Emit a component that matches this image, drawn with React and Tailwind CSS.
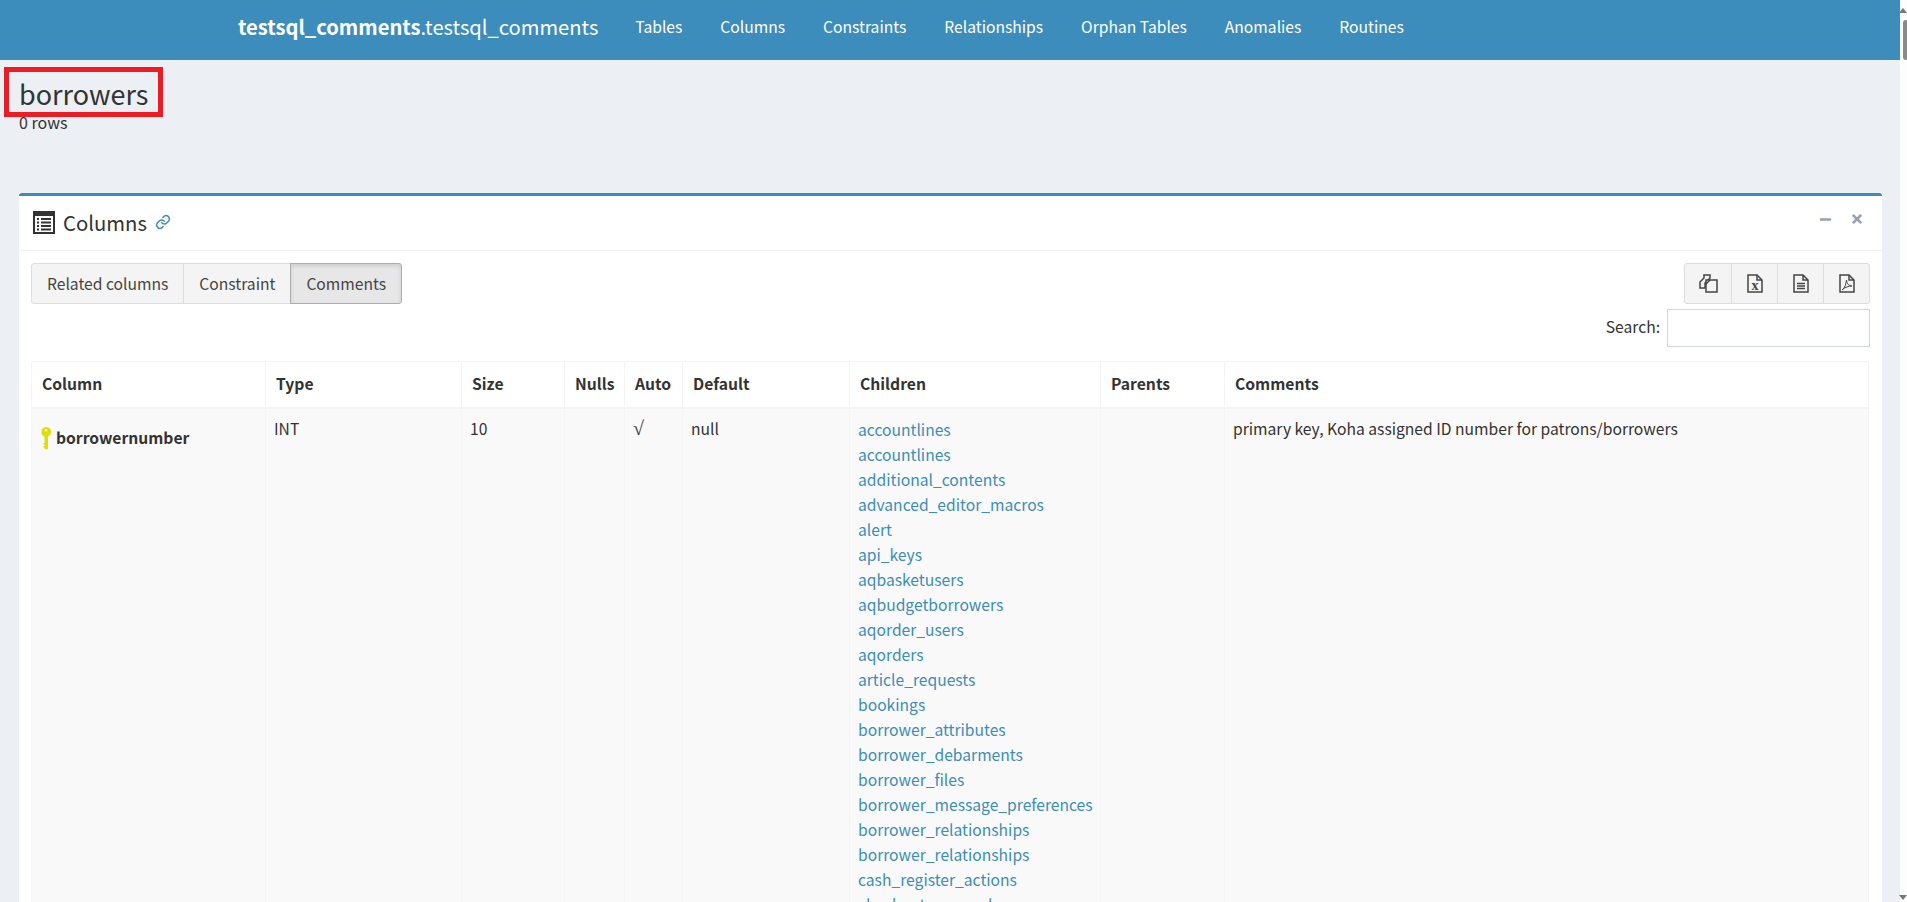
import { FaMinus, FaTimes } from "react-icons/fa";

const navItems = [
  "Tables",
  "Columns",
  "Constraints",
  "Relationships",
  "Orphan Tables",
  "Anomalies",
  "Routines",
];

const children = [
  "accountlines",
  "accountlines",
  "additional_contents",
  "advanced_editor_macros",
  "alert",
  "api_keys",
  "aqbasketusers",
  "aqbudgetborrowers",
  "aqorder_users",
  "aqorders",
  "article_requests",
  "bookings",
  "borrower_attributes",
  "borrower_debarments",
  "borrower_files",
  "borrower_message_preferences",
  "borrower_relationships",
  "borrower_relationships",
  "cash_register_actions",
  "checkout_renewals",
];

const FileIcon = ({ children: inner }) => (
  <svg width="16" height="19" viewBox="0 0 16 19" fill="none" stroke="#444" strokeWidth="1.5">
    <path d="M1 1h9l5 5v12H1z" />
    <path d="M10 1v5h5" />
    {inner}
  </svg>
);

const exportIcons = [
  <svg key="copy" width="19" height="19" viewBox="0 0 19 19" fill="none" stroke="#444" strokeWidth="1.5">
    <path d="M1 8l4-4V1h6v3L6 9v5H1z" />
    <path d="M7 6h11v12H7V10z" fill="#f4f4f4" />
    <path d="M7 10l4-4" />
  </svg>,
  <FileIcon key="excel">
    <text x="8" y="15.500" textAnchor="middle" fontSize="14" fontWeight="700" fontFamily="'Liberation Serif', serif" fill="#444" stroke="none">
      x
    </text>
  </FileIcon>,
  <FileIcon key="csv">
    <path d="M4 9.500h8M4 12h8M4 14.500h8" />
  </FileIcon>,
  <FileIcon key="pdf">
    <path d="M3 16c3-2 4-6 4.500-10 .5 4 2 5.500 5.500 6-3 0-7 1-10 4z" strokeWidth="1" />
  </FileIcon>,
];

const TH = ({ children: label }) => (
  <th className="border border-b-0 border-[#f4f4f4] px-[10px] text-left text-[15.700px] font-bold">
    {label}
  </th>
);

const TD = ({ children: inner, className = "" }) => (
  <td className={`border border-[#f4f4f4] px-2 pt-[10px] align-top ${className}`}>{inner}</td>
);

export default function App() {
  return (
    <div
      className="relative flex h-[902px] w-[1907px] overflow-hidden bg-[#fdfdfd] text-[15.650px] leading-[20px] text-[#333]"
      style={{ fontFamily: "'Noto Sans CJK SC', 'Liberation Sans', sans-serif" }}
    >
      <div className="flex w-[1900px] flex-col bg-[#ecf0f5]">
        <header className="flex h-[60px] shrink-0 items-center bg-[#3c8dbc] pb-[6px] pl-[238px] text-white">
          <div className="mr-[18px] text-[20.150px]">
            <b>testsql_comments</b>.testsql_comments
          </div>
          {navItems.map((item) => (
            <a key={item} className="px-[19px] text-[15.650px] text-white">
              {item}
            </a>
          ))}
        </header>

        <section className="h-[133px] shrink-0 px-[19px] pt-[17px]">
          <h1 className="text-[27px] leading-[33px]">borrowers</h1>
          <div className="mt-[2px] text-[16px] leading-[20px]">0 rows</div>
        </section>

        <div className="ml-[19px] w-[1863px] flex-1 rounded-t-[3px] border-t-[3px] border-[#3c8dbc] bg-white">
          <div className="flex h-[55px] items-center justify-between border-b border-[#f4f4f4] pl-[14px] pr-[18px]">
            <div className="flex items-center pb-[2px]">
              <svg width="22" height="23" viewBox="0 0 22 23" className="mr-[8px]">
                <path fillRule="evenodd" fill="#333" d="M0 0h22v23H0zM2 5v16h18V5z" />
                <path stroke="#333" strokeWidth="2" d="M4 8h2M8 8h10M4 11.500h2M8 11.500h10M4 15h2M8 15h10M4 18.500h2M8 18.500h10" />
              </svg>
              <span className="text-[20.300px]">Columns</span>
              <svg width="16" height="16" viewBox="0 0 24 24" fill="none" stroke="#3c8dbc" strokeWidth="2.200" strokeLinecap="round" className="ml-[8px]">
                <path d="M10 13a5 5 0 0 0 7.500.500l3-3a5 5 0 0 0-7-7l-1.700 1.700" />
                <path d="M14 11a5 5 0 0 0-7.500-.500l-3 3a5 5 0 0 0 7 7l1.700-1.700" />
              </svg>
            </div>
            <div className="flex items-center gap-[18px] pb-[8px] text-[#97a0b3]">
              <FaMinus size={13} />
              <FaTimes size={14} />
            </div>
          </div>

          <div className="px-3 pt-[12px]">
            <div className="flex items-start justify-between">
              <div className="flex h-[41px] text-[#444]">
                <button className="rounded-l-[3px] border border-[#ddd] bg-[#f4f4f4] px-[15px]">Related columns</button>
                <button className="ml-[-1px] border border-[#ddd] bg-[#f4f4f4] px-[15px]">Constraint</button>
                <button className="ml-[-1px] rounded-r-[3px] border border-[#adadad] bg-[#e7e7e7] px-[15px] shadow-[inset_0_2px_4px_rgba(0,0,0,0.12)]">Comments</button>
              </div>
              <div className="flex h-[41px]">
                {exportIcons.map((icon, i) => (
                  <div
                    key={i}
                    className="ml-[-1px] flex w-[47px] items-center justify-center border border-[#ddd] bg-[#f4f4f4] first:w-[48px] first:rounded-l-[3px] last:rounded-r-[3px]"
                  >
                    {icon}
                  </div>
                ))}
              </div>
            </div>

            <div className="mt-[5px] flex items-center justify-end">
              <label className="mb-[3px] mr-[7px]">Search:</label>
              <input className="h-[38px] w-[203px] border border-[#d2d6de] bg-white" />
            </div>

            <table className="mt-[14px] w-[1838px] table-fixed border-collapse">
              <colgroup>
                <col className="w-[234px]" />
                <col className="w-[196px]" />
                <col className="w-[103px]" />
                <col className="w-[60px]" />
                <col className="w-[58px]" />
                <col className="w-[167px]" />
                <col className="w-[251px]" />
                <col className="w-[124px]" />
                <col />
              </colgroup>
              <thead>
                <tr className="h-[46px]">
                  <TH>Column</TH>
                  <TH>Type</TH>
                  <TH>Size</TH>
                  <TH>Nulls</TH>
                  <TH>Auto</TH>
                  <TH>Default</TH>
                  <TH>Children</TH>
                  <TH>Parents</TH>
                  <TH>Comments</TH>
                </tr>
              </thead>
              <tbody>
                <tr className="border-t-2 border-[#f4f4f4] bg-[#f9f9f9]">
                  <TD>
                    <div className="mt-[8px] flex items-center font-bold">
                      <svg width="10" height="22" viewBox="0 0 10 22" className="ml-px mr-[5px]">
                        <path fillRule="evenodd" fill="#dde000" d="M5 0a5 5 0 0 1 2 9.600V22H3.500v-1.500H2.500V19h1v-1.500h-1V16h1V9.600A5 5 0 0 1 5 0zm0 2a1.300 1.300 0 1 0 0 2.600A1.300 1.300 0 0 0 5 2z" />
                      </svg>
                      borrowernumber
                    </div>
                  </TD>
                  <TD>INT</TD>
                  <TD>10</TD>
                  <TD />
                  <TD>
                    <span className="text-[20px] leading-[16px]" style={{ fontFamily: "'Liberation Serif', serif" }}>
                      √
                    </span>
                  </TD>
                  <TD>null</TD>
                  <TD>
                    <div className="mt-[-2px] flex flex-col">
                      {children.map((name, i) => (
                        <a key={i} className="h-[25px] leading-[25px] text-[#3c8dbc]">
                          {name}
                        </a>
                      ))}
                    </div>
                  </TD>
                  <TD />
                  <TD>primary key, Koha assigned ID number for patrons/borrowers</TD>
                </tr>
              </tbody>
            </table>
          </div>
        </div>
      </div>

      {/* annotation box round the title */}
      <div className="absolute left-[4px] top-[67px] h-[50px] w-[159px] border-[5px] border-[#ed1c24]" />

      {/* browser scrollbar */}
      <div className="absolute right-0 top-[8px] h-0 w-0 border-x-[4px] border-b-[5px] border-x-transparent border-b-[#777]" />
      <div className="absolute right-0 top-[20px] h-[40px] w-[4px] rounded-l-[3px] bg-[#8a8a8a]" />
      <div className="absolute bottom-[2px] right-0 h-0 w-0 border-x-[4px] border-t-[5px] border-x-transparent border-t-[#777]" />
    </div>
  );
}
